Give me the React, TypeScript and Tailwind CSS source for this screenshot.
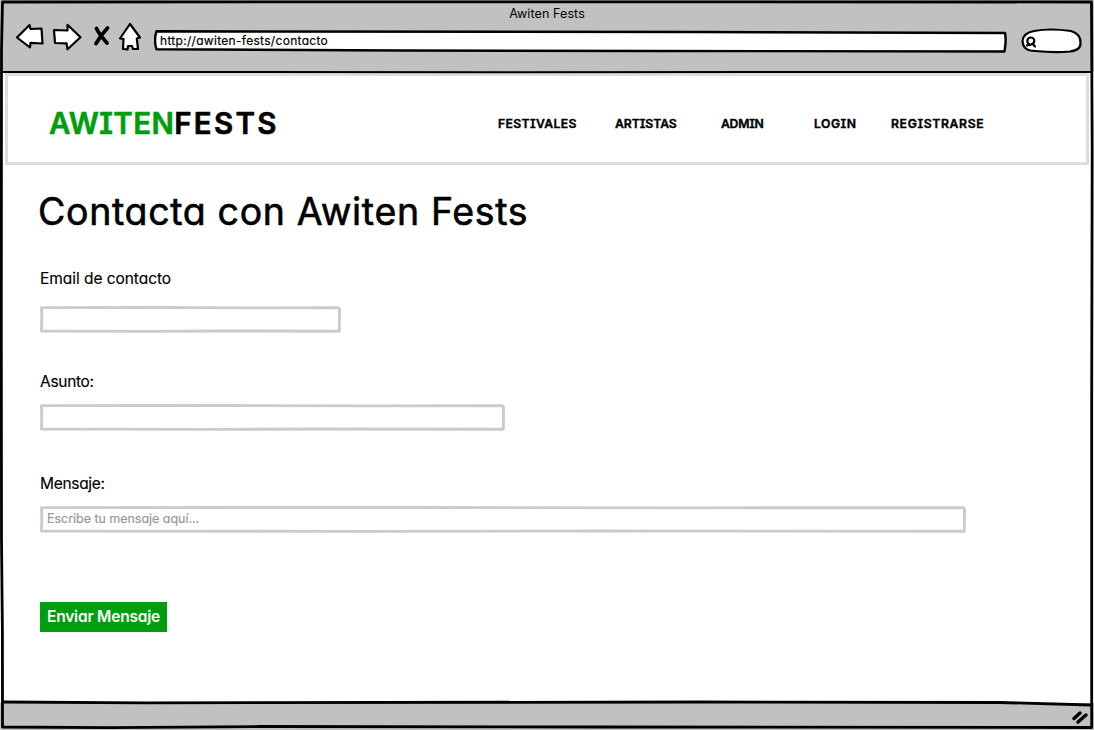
import React from "react";

const navItems = [
  { label: "FESTIVALES", box: "w-[117px]", spacing: "tracking-[0.35px]" },
  { label: "ARTISTAS", box: "w-[106px]", spacing: "tracking-[-0.05px]" },
  { label: "ADMIN", box: "w-[93px]", spacing: "tracking-[-0.25px]" },
  { label: "LOGIN", box: "w-[77px]", spacing: "tracking-[0.5px]" },
  { label: "REGISTRARSE", box: "w-[110px]", spacing: "tracking-[0.65px]" },
];

function SketchBox({ width, children }: { width: number; children?: React.ReactNode }) {
  return (
    <div className="relative h-[27px]" style={{ width }}>
      <svg className="absolute inset-0" width={width} height={27} fill="none" stroke="#cbcbcb" strokeWidth={2.9} strokeLinejoin="round">
        <path d={`M1.5 1.6 L${width * 0.4} 1.5 L${width * 0.7} 1.9 L${width - 3} 1.6 L${width - 1.5} 3 L${width - 1.7} 25.2 L${width * 0.6} 25 L${width * 0.35} 25.4 L1.5 25 L1.8 12 Z`} />
      </svg>
      <div className="relative flex h-[27px] items-center pl-[7px] text-[12.5px] leading-none tracking-[-0.03px] text-[#999999] [-webkit-text-stroke:0.2px]">{children}</div>
    </div>
  );
}

function Toolbar() {
  return (
    <div className="flex h-[72px] flex-col bg-[#c1c1c1]">
      <div className="flex h-[27px] items-center justify-center pt-[1px] text-[12.5px] leading-none">
        <span className="tracking-[0.1px]">Awiten Fests</span>
      </div>
      <div className="flex h-[28px] items-start">
        <svg className="overflow-visible" width="154" height="28" viewBox="0 27 154 28" fill="#fff" stroke="#000" strokeWidth="2.2" strokeLinejoin="round" strokeLinecap="round">
          <path d="M17 37.5 L29.5 25 L30.5 29 L41.5 28.5 L42.5 43.5 L30.5 42.8 L30 47.5 Z" />
          <path d="M54 30 L67.5 30.5 L67.5 24.8 L80.5 37.3 L67.5 49.3 L66.5 43.3 L55 43 Z" />
          <path d="M96.500 28.500 Q99 34 107 43 M107.500 28 Q101 35 96 43.500" strokeWidth="3.8" fill="none" />
          <path d="M130 24 L140 37.5 L136.8 38.5 L138 49 L133 49 L132 46 L128 46 L127.5 49.5 L123 49 L123.5 39 L120 38.5 Z" />
        </svg>
        <div className="relative h-[28px] w-[853px]">
          <svg className="absolute inset-0" width="853" height="28" viewBox="153.5 27 853 28" fill="#fff" stroke="#000" strokeWidth="2.4" strokeLinejoin="round">
            <path d="M156 31.3 Q400 30.8 700 32 L1004.5 33 Q1006 40 1004 51.5 L650 51 L400 50.5 L156 49.3 Q153 40 156 31.3 Z" />
          </svg>
          <span className="relative block pl-[6px] pt-[6.5px] text-[12px] leading-[13px] tracking-[0.3px] [-webkit-text-stroke:0.2px]">http://awiten-fests/contacto</span>
        </div>
        <svg className="ml-[12px] overflow-visible" width="64" height="30" viewBox="1019 27 64 30" fill="none" stroke="#000" strokeWidth="2.2" strokeLinecap="round">
          <path fill="#fff" d="M1034 31 Q1050 28 1071 31 Q1081 34 1080.5 43 Q1081 50 1070 51.5 Q1055 53 1035 51 Q1023 51 1022.500 41 Q1023 33 1034 31 Z" />
          <circle cx="1030.8" cy="41" r="3.5" />
          <path d="M1032.500 43.5 L1035 46.5 M1027 45.3 L1030 45" />
        </svg>
      </div>
    </div>
  );
}

function WindowOutline() {
  return (
    <svg className="pointer-events-none absolute inset-0" width="1094" height="730" fill="none" stroke="#000" strokeWidth="2.8" strokeLinejoin="round">
      <path d="M2.5 2 L500 1.8 L1091.5 2 L1092.2 150 L1091.7 400 L1091.7 727.5 L600 727 L260 726.5 L110 727.7 L2.5 727 L2.4 630 L1.5 540 L1.3 320 L1.5 50 Z" />
      <path d="M2 71.9 L500 72.2 L1091 72" strokeWidth="2" />
      <path d="M3 702 L145 702.8 L700 702 L1000 702.5 L1091 705" />
      <path d="M1074 718.500 L1080 713 M1078 722 L1086 715" strokeWidth="3.5" strokeLinecap="round" />
    </svg>
  );
}

export default function App() {
  return (
    <div className="relative flex h-[730px] w-[1094px] flex-col overflow-hidden bg-white font-['Inter','Noto_Sans',sans-serif] text-black [font-feature-settings:'cv11','cv08']">
      <Toolbar />
      <header className="ml-[5px] mt-[1px] flex h-[92px] w-[1084px] items-center border-[3px] border-[#dddddd]">
        <div className="w-[449px] whitespace-nowrap pl-[41px] pt-[9px] text-[29.5px] font-semibold leading-none [-webkit-text-stroke:0.6px]">
          <span className="tracking-[0.35px] text-[#009e0f]">AWITEN</span><span className="tracking-[2.3px]">FESTS</span>
        </div>
        <nav className="flex pl-[41px] pt-[10px] text-[12.2px] font-semibold leading-none [-webkit-text-stroke:0.4px]">
          {navItems.map((item) => (
            <a key={item.label} className={`${item.box} ${item.spacing} whitespace-nowrap`}>{item.label}</a>
          ))}
        </nav>
      </header>
      <main className="flex flex-1 flex-col items-start pl-[40px]">
        <h1 className="-ml-[2px] mt-[24px] whitespace-nowrap text-[37.5px] font-normal leading-[46px] tracking-[0.65px] [-webkit-text-stroke:0.6px]">Contacta con Awiten Fests</h1>
        <label className="mt-[34px] text-[15.5px] leading-[20px] tracking-[-0.05px] [-webkit-text-stroke:0.15px]">Email de contacto</label>
        <div className="mt-[17px]"><SketchBox width={301} /></div>
        <label className="mt-[39px] text-[15.5px] leading-[20px] tracking-[-0.3px] [-webkit-text-stroke:0.15px]">Asunto:</label>
        <div className="mt-[12px]"><SketchBox width={465} /></div>
        <label className="mt-[43px] text-[15.5px] leading-[20px] tracking-[-0.3px] [-webkit-text-stroke:0.15px]">Mensaje:</label>
        <div className="mt-[12px]"><SketchBox width={926}>Escribe tu mensaje aquí...</SketchBox></div>
        <button className="mt-[69px] flex h-[30px] w-[127px] items-center justify-center whitespace-nowrap bg-[#009e0f] text-[15.5px] font-semibold leading-none tracking-[-0.2px] text-white">Enviar Mensaje</button>
      </main>
      <footer className="h-[27px] bg-[#c1c1c1]" />
      <WindowOutline />
    </div>
  );
}
